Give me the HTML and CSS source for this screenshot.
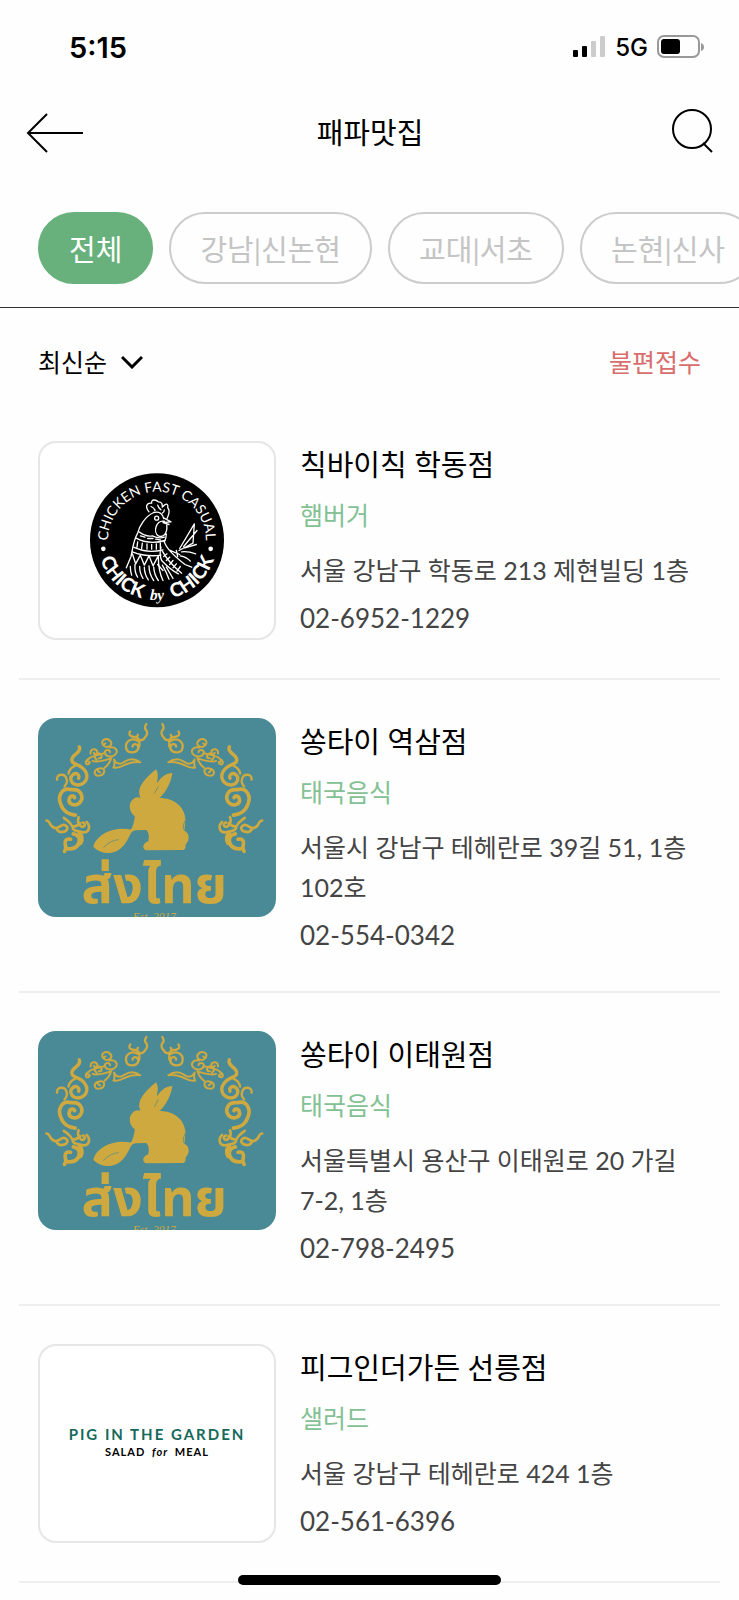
FILE: index.html
```html
<!DOCTYPE html>
<html lang="ko">
<head>
<meta charset="utf-8">
<meta name="viewport" content="width=device-width, initial-scale=1">
<title>패파맛집</title>
<link rel="stylesheet" href="styles.css">
</head>
<body>
<svg class="defs" aria-hidden="true">
  <defs>
    <g id="scroll" fill="none" stroke="#cda93f" stroke-linecap="round" stroke-linejoin="round">
      <path stroke-width="7" d="M350 42q-8 12 1 20q5 10-5 20q-4 10-17 8q-10-6-4-16M302 64q-8 12 8 16q18 0 20 14M324 92c-22-12-38 6-34 22c4 18 36 16 36-2c0-13-17-13-17-3M329 94q3 12-4 24q-6 8-14 8"/>
      <path stroke-width="6" d="M332 156c-20-14-34-10-46-2c-12 10-26 8-32-6c2 14 2 20-2 24c18 4 28-6 38-10q20-8 42-6"/>
      <path stroke-width="6" d="M222 106c-12-16 8-24 18-16c12 10 4 22-12 20q-8-6 0-10M240 112c16-4 26 8 20 18c-10 14-30 10-34-2c0-10 14-12 16-2M184 130c-2-16 18-16 20-4c0 8-10 8-10 2M202 148c-12-8-4-22 8-18c12 6 6 16-2 14M222 130c-16 4-38 8-44 16c-12 6-10 18-2 16c8-2 6-10 0-8M190 152c10 6 30 0 50-6M246 142q-6 20-20 30M204 176c-14 8-8 22 6 20c16-2 20-20 6-22c-12-2-14 10-4 12"/>
      <path stroke-width="10" d="M150 110c8 16-22 24-22 38c-2 14 16 12 30 24c26 22 14 50-12 52c-20 0-28-22-14-32c10-6 20 2 16 12"/>
      <path stroke-width="7" d="M84 208c-4-18 24-20 28-2q4 12-6 22M138 166q-18 8-20 24"/>
      <path stroke-width="11" d="M126 238c-30-8-42 22-30 46c6 18 24 28 42 30M126 238c30-4 40 24 24 40c-14 12-34 2-30-12c2-10 14-12 16-4"/>
      <path stroke-width="8" d="M52 330c12 0 8 18 24 22c14 4 20-14 32-8c12 6 6 20-8 20q-10 2-16-6M104 322q20 14 24 24q12 6 24-8M148 320q-6 18 8 28c12 4 14-10 4-12M172 334q12 12 4 26c-8 10-20 4-28 2q-16-2-18-10"/>
      <path stroke-width="11" d="M106 422q6-10 2-22q-2-18 16-14M114 414c28 4 38-14 36-30q-4-12-18-14M150 366q14 14 4 32"/>
    </g>
    <symbol id="thai" viewBox="25 24 714 594" preserveAspectRatio="xMidYMid slice">
      <rect x="25" y="24" width="714" height="594" fill="#4a8996"/>
      <use href="#scroll"/>
      <use href="#scroll" transform="matrix(-1 0 0 1 748 0)"/>
      <path fill="#cda93f" d="M333 262C318 232 348 203 379 177C389 192 382 207 382 219C394 200 410 188 428 188C424 216 410 243 390 263C432 263 464 288 467 326L464 360C481 370 480 390 467 402Q469 414 461 418L348 419C335 411 341 397 356 392C359 377 358 367 350 358L318 359C302 360 303 378 286 400C265 430 222 438 192 409C200 369 258 346 304 357C309 351 313 337 316 318C297 304 297 277 309 268Q318 258 333 262Z"/>
      <path fill="none" stroke="#4a8996" stroke-width="2" d="M222 411Q242 389 268 387M386 228Q380 240 374 250M464 360Q456 350 466 330"/>
      <text x="374" y="576" text-anchor="middle" class="thai-name">ส่งไทย</text>
      <text x="374" y="626" text-anchor="middle" class="thai-est">Est. 2017</text>
    </symbol>
  </defs>
</svg>

<div class="app">
  <div class="status">
    <span class="clock">5:15</span>
    <div class="signals">
      <svg width="34" height="22" viewBox="0 0 34 22" aria-hidden="true">
        <rect x="1" y="14" width="5" height="7" rx="1"/><rect x="10" y="10" width="5" height="11" rx="1"/>
        <rect x="19" y="5" width="5" height="16" rx="1" fill="#ccc"/><rect x="28" y="0" width="5" height="21" rx="1" fill="#ccc"/>
      </svg>
      <span class="network">5G</span>
      <svg width="48" height="24" viewBox="0 0 48 24" aria-hidden="true">
        <rect x="1" y="1" width="41" height="21" rx="6" fill="none" stroke="#999" stroke-width="2"/>
        <rect x="4" y="4" width="19" height="15" rx="3"/><path d="M44 8q3 1 3 4t-3 4z" fill="#999"/>
      </svg>
    </div>
  </div>

  <header class="topbar">
    <button class="icon-btn" type="button" aria-label="뒤로">
      <svg width="58" height="40" viewBox="0 0 58 40" fill="none" stroke="#000" stroke-width="2"><path d="M57 20H2M21 1L2 20l19 19"/></svg>
    </button>
    <h1 class="page-title">패파맛집</h1>
    <button class="icon-btn icon-end" type="button" aria-label="검색">
      <svg width="42" height="48" viewBox="0 0 42 48" fill="none" stroke="#000" stroke-width="2"><circle cx="20" cy="20" r="19"/><path d="M31 34l9 9"/></svg>
    </button>
  </header>

  <nav class="chips" aria-label="지역">
    <button class="chip chip-on" type="button">전체</button>
    <button class="chip" type="button">강남|신논현</button>
    <button class="chip" type="button">교대|서초</button>
    <button class="chip" type="button">논현|신사</button>
  </nav>

  <div class="tools">
    <div class="sort">
      <select class="sort-select" aria-label="정렬"><option>최신순</option></select>
      <svg width="22" height="14" viewBox="0 0 22 14" fill="none" stroke="#000" stroke-width="3" aria-hidden="true"><path d="M1 2l10 10L21 2"/></svg>
    </div>
    <a class="report" href="#report">불편접수</a>
  </div>

  <main class="list">
    <article class="item">
      <div class="thumb thumb-line">
        <svg class="art" viewBox="31 41 702 582" role="img" aria-label="Chick by Chick">
          <defs>
            <path id="arc-top" d="M237 357A147 147 0 1 1 527 357"/>
            <path id="arc-low" d="M202 331A180 180 0 0 0 562 331"/>
          </defs>
          <circle cx="382" cy="331" r="201"/>
          <g fill="#fff">
            <text class="seal-top"><textPath href="#arc-top" startOffset="50%" text-anchor="middle">CHICKEN FAST CASUAL</textPath></text>
            <text class="seal-low"><textPath href="#arc-low" startOffset="26%" text-anchor="middle">CHICK</textPath></text>
            <text class="seal-by"><textPath href="#arc-low" startOffset="50%" text-anchor="middle">by</textPath></text>
            <text class="seal-low"><textPath href="#arc-low" startOffset="74%" text-anchor="middle">CHICK</textPath></text>
            <circle cx="221" cy="357" r="7"/><circle cx="543" cy="357" r="7"/>
          </g>
          <g fill="none" stroke="#fff" stroke-width="4" stroke-linecap="round" stroke-linejoin="round">
            <path d="M358 246C346 232 350 218 366 220C364 208 378 208 386 216C398 216 398 224 398 232C412 216 416 224 414 234C424 244 416 256 412 266M364 230q10 4 12 12M384 226q2 8 10 14M404 240q0 8-6 10"/>
            <path d="M372 248C346 260 328 290 324 310C312 330 310 350 304 380L290 414M372 248q24-6 30 18M402 264l22 12l-24 2l18 6M404 274c-26-4-34 34-18 44c18 8 30-14 24-38M410 312q0 14-6 24"/>
            <circle cx="381" cy="265" r="6"/>
            <path d="M328 306q20 16 40 12q20 10 36 4M332 318l14 4M354 326h16M378 328l14 2M318 324q40 22 88 8M312 352q40 20 88 8M308 366q40 16 86 10M324 336l-2 16M338 340l-2 16M352 342v16M366 344v14M380 342v16M392 340v16"/>
            <path d="M308 372l10 30l14-26l12 30l14-28l12 30l16-30M302 410q0 16 4 26M316 404q-2 24 8 38M330 410q0 20 10 36M344 412q0 20 12 38M358 408q0 24 14 44M372 412q2 24 14 40M386 380q0 44 14 72"/>
            <path d="M404 336C412 362 448 390 466 404L486 412M394 352q-6 22 2 40q26 28 50 40M398 364q18 34 58 66M402 380l10-8M410 392l10-10M420 404l10-12M430 414l10-12M442 424l10-14M418 360l32 14M450 356L494 282L490 340L448 362M462 350L502 302M466 354L500 344M440 362l4 18M456 366q20-2 42 6M452 378q20 4 30 16M398 406q14 24 20 42M410 412l20 34M384 404l16 18"/>
          </g>
        </svg>
      </div>
      <div class="info">
        <h2 class="name">칙바이칙 학동점</h2>
        <p class="kind">햄버거</p>
        <p class="addr">서울 강남구 학동로 213 제현빌딩 1층</p>
        <a class="tel" href="tel:02-6952-1229">02-6952-1229</a>
      </div>
    </article>

    <article class="item">
      <div class="thumb"><svg class="art" role="img" aria-label="쏭타이"><use href="#thai"/></svg></div>
      <div class="info">
        <h2 class="name">쏭타이 역삼점</h2>
        <p class="kind">태국음식</p>
        <p class="addr">서울시 강남구 테헤란로 39길 51, 1층 102호</p>
        <a class="tel" href="tel:02-554-0342">02-554-0342</a>
      </div>
    </article>

    <article class="item">
      <div class="thumb"><svg class="art" role="img" aria-label="쏭타이"><use href="#thai"/></svg></div>
      <div class="info">
        <h2 class="name">쏭타이 이태원점</h2>
        <p class="kind">태국음식</p>
        <p class="addr">서울특별시 용산구 이태원로 20 가길 7-2, 1층</p>
        <a class="tel" href="tel:02-798-2495">02-798-2495</a>
      </div>
    </article>

    <article class="item">
      <div class="thumb thumb-line pig">
        <span class="pig-name">PIG IN THE GARDEN</span>
        <span class="pig-sub">SALAD <i>for</i> MEAL</span>
      </div>
      <div class="info">
        <h2 class="name">피그인더가든 선릉점</h2>
        <p class="kind">샐러드</p>
        <p class="addr">서울 강남구 테헤란로 424 1층</p>
        <a class="tel" href="tel:02-561-6396">02-561-6396</a>
      </div>
    </article>
  </main>
</div>
<div class="home-bar"></div>
</body>
</html>
```
FILE: styles.css
```css
* { box-sizing: border-box; }
body, h1, h2, p { margin: 0; font-weight: 400; }
body {
  background: #fefefe;
  color: #000;
  font-family: Lato, "Noto Sans CJK KR", sans-serif;
  font-size: 25px;
}
button, select { font: inherit; color: inherit; border: 0; padding: 0; background: none; }
a { color: inherit; text-decoration: none; }
svg { display: block; }
.defs { position: absolute; width: 0; height: 0; }

.status {
  display: flex;
  justify-content: space-between;
  align-items: center;
  height: 94px;
  padding: 0 34px 0 69px;
}
.clock { font: 600 29px Inter, sans-serif; }
.signals { display: flex; align-items: center; gap: 9px; }
.network { font: 500 24px Inter, sans-serif; }

.topbar {
  display: grid;
  grid-template-columns: 1fr auto 1fr;
  align-items: center;
  height: 78px;
  padding: 0 25px 0 26px;
}
.icon-btn { justify-self: start; }
.icon-end { justify-self: end; }
.page-title { font-size: 29px; line-height: 44px; }

.chips {
  display: flex;
  gap: 16px;
  padding: 40px 0 23px 38px;
  overflow-x: auto;
  scrollbar-width: none;
  border-bottom: 1px solid #333;
}
.chip {
  flex: none;
  height: 72px;
  padding: 0 29px;
  border: 2px solid #ccc;
  border-radius: 36px;
  color: #c4c4c4;
  font-size: 29px;
}
.chip-on { background: #69b17c; border-color: #69b17c; color: #fff; }

.tools {
  display: flex;
  justify-content: space-between;
  align-items: center;
  padding: 34px 38px 21px;
  line-height: 40px;
}
.sort { display: flex; align-items: center; gap: 13px; }
.sort-select { appearance: none; height: 40px; }
.report { color: #d96c6c; }

.list { padding: 0 19px; }
.item {
  display: flex;
  align-items: flex-start;
  gap: 24px;
  padding: 38px 19px;
  border-bottom: 2px solid #eee;
}
.thumb {
  flex: none;
  width: 238px;
  height: 199px;
  border-radius: 18px;
  overflow: hidden;
}
.thumb-line { border: 2px solid #e6e6e6; background: #fff; }
.art { width: 100%; height: 100%; }
.info { flex: 1; padding-top: 2px; word-break: keep-all; }
.name { font-size: 29px; line-height: 44px; }
.kind { margin-top: 8px; line-height: 40px; color: #83c194; }
.addr { margin-top: 15px; line-height: 40px; color: #444; }
.tel { display: block; margin-top: 10px; font-size: 26px; line-height: 36px; color: #444; }

.seal-top { font: 400 42px Lato, sans-serif; }
.seal-low { font: 900 57px Lato, sans-serif; }
.seal-by { font: italic 700 46px "Liberation Serif", serif; }
.thai-name { font: 700 156px "Noto Sans Thai", "Noto Sans", sans-serif; fill: #cda93f; }
.thai-est { font: italic 34px "Liberation Serif", serif; fill: #cda93f; }

.pig { display: flex; flex-direction: column; align-items: center; justify-content: center; padding-bottom: 4px; }
.pig-name { font-size: 15px; line-height: 20px; font-weight: 700; letter-spacing: 2px; color: #14695a; }
.pig-sub { font-size: 11px; line-height: 16px; font-weight: 700; letter-spacing: 1px; word-spacing: 3px; }

.home-bar {
  position: fixed;
  left: 50%;
  bottom: 15px;
  width: 263px;
  height: 10px;
  margin-left: -132px;
  border-radius: 5px;
  background: #000;
}
```
